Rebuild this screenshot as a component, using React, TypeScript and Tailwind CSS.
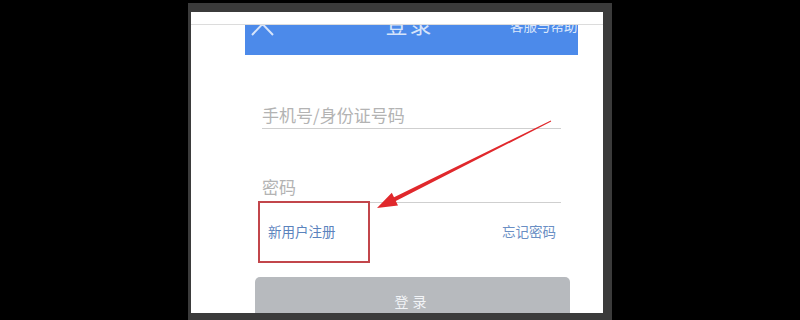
import React from "react";

export default function App() {
  const font = { fontFamily: '"Noto Sans CJK SC", "Noto Sans", sans-serif' };
  return (
    <div className="relative w-[800px] h-[320px] bg-black overflow-hidden pl-[188px] pt-[3px]" style={font}>
      <div className="w-[424px] h-[317px] bg-[#3b3b3b] pt-[9px] pl-[3px] pr-[9px] pb-[7px] flex">
        <div className="relative flex-1 bg-white flex flex-col overflow-hidden">
          <div className="h-[13px] flex-none border-b border-[#dcdcdc]" />
          <div className="ml-[54px] w-[333px] flex flex-col">
            <div className="h-[30px] bg-[#4c8aea] flex items-start overflow-hidden">
              <div className="w-[68px] flex-none">
                <svg width="68" height="30" viewBox="0 0 68 30" className="overflow-visible">
                  <path d="M7 10 L17.5 -1 L28 10" fill="none" stroke="#d6e4fa" strokeWidth="2" />
                </svg>
              </div>
              <div className="flex-1 text-center text-[22px] leading-[22px] tracking-[2px] text-[#d6e4fa] -mt-[13px] pr-[4px]">登录</div>
              <div className="w-[68px] flex-none text-[13.5px] leading-[14px] text-[#dbe7fb] -mt-[7px] whitespace-nowrap">客服与帮助</div>
            </div>
            <div className="px-[17px] flex flex-col">
              <div className="mt-[50px] h-[24px] border-b border-[#cfcfcf] text-[17px] leading-[20px] text-[#b3b3b3]">手机号/身份证号码</div>
              <div className="mt-[48px] h-[26px] border-b border-[#cfcfcf] text-[17px] leading-[20px] text-[#b3b3b3]">密码</div>
            </div>
            <div className="mt-[20px] pl-[23px] pr-[22px] flex justify-between text-[13.5px] leading-[16px] text-[#5b83bd]">
              <span>新用户注册</span>
              <span className="text-[#6a8fc4]">忘记密码</span>
            </div>
            <div className="mt-[38px] ml-[10px] w-[315px] h-[40px] rounded-t-[5px] bg-[#b7babe] pt-[16px] text-center text-[14px] leading-[16px] tracking-[4px] text-[#f2f4f7]">登录</div>
          </div>
          <div className="absolute left-[67px] top-[189px] w-[112px] h-[62px] border-2 border-[#c2464b]" />
        </div>
      </div>
      <svg className="absolute left-0 top-0 pointer-events-none" width="800" height="320" viewBox="0 0 800 320">
        <polygon
          points="550.8,120.4 394,197.3 391.8,192.8 377,208 398,205.4 395.8,200.9 551.2,121.6"
          fill="#e0282c"
        />
      </svg>
    </div>
  );
}
